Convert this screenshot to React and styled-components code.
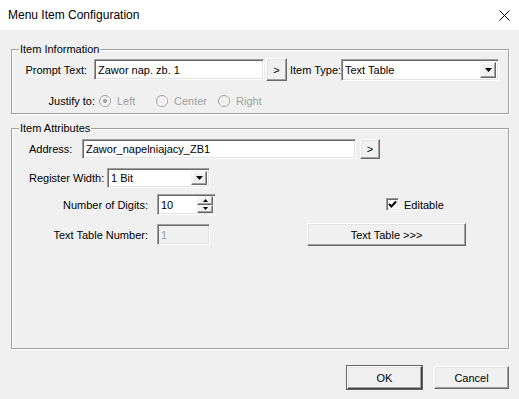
import React from 'react';
import styled, { createGlobalStyle } from 'styled-components';

const GlobalStyle = createGlobalStyle`
  html, body {
    margin: 0;
    padding: 0;
    background: #f0f0f0;
  }
  body {
    font-family: 'Liberation Sans', Arial, sans-serif;
    font-size: 11px;
    color: #000;
  }
`;

const Window = styled.div`
  width: 519px;
  height: 399px;
  background: #f0f0f0;
  display: flex;
  flex-direction: column;
  overflow: hidden;
`;

const TitleBar = styled.div`
  height: 30px;
  flex: none;
  background: #fff;
  display: flex;
  align-items: center;
  justify-content: space-between;
  padding: 0 9px 0 8px;
  box-sizing: border-box;
  font-size: 12px;
`;

const Group = styled.fieldset`
  margin: ${({ $top }) => $top}px 0 0 11px;
  padding: 0;
  width: 498px;
  height: ${({ $height }) => $height}px;
  box-sizing: border-box;
  border: 1px solid #a0a0a0;
  box-shadow: 1px 1px 0 #fff, inset 1px 1px 0 #fff;
  min-width: 0;
`;

const Legend = styled.legend`
  margin-left: 7px;
  padding: 0 1px;
  line-height: 13px;
  background: #f0f0f0;
`;

const Row = styled.div`
  display: flex;
  align-items: center;
  height: ${({ $h }) => $h}px;
  margin-top: ${({ $mt }) => $mt || 0}px;
  padding-left: ${({ $pl }) => $pl || 0}px;
`;

const Label = styled.span`
  flex: none;
  width: ${({ $w }) => $w}px;
  text-align: ${({ $align }) => $align || 'left'};
  padding-right: ${({ $pr }) => $pr || 0}px;
  box-sizing: border-box;
  white-space: nowrap;
  color: ${({ $disabled }) => ($disabled ? '#a0a0a0' : '#000')};
`;

const Field = styled.div`
  flex: none;
  width: ${({ $w }) => $w}px;
  height: ${({ $h }) => $h || 20}px;
  box-sizing: border-box;
  display: flex;
  align-items: center;
  padding-left: 3px;
  background: ${({ $disabled }) => ($disabled ? '#f0f0f0' : '#fff')};
  color: ${({ $disabled }) => ($disabled ? '#a0a0a0' : '#000')};
  border: 1px solid;
  border-color: #a0a0a0 #fff #fff #a0a0a0;
  box-shadow: inset 1px 1px 0 #696969, inset -1px -1px 0 #e3e3e3;
  white-space: nowrap;
  overflow: hidden;
`;

const Button = styled.div`
  flex: none;
  width: ${({ $w }) => $w}px;
  height: ${({ $h }) => $h || 23}px;
  margin-left: ${({ $ml }) => $ml || 0}px;
  box-sizing: border-box;
  display: flex;
  align-items: center;
  justify-content: center;
  background: #f0f0f0;
  border: 1px solid;
  border-color: ${({ $default }) =>
    $default ? '#fff #404040 #404040 #fff' : '#fff #696969 #696969 #fff'};
  box-shadow: ${({ $default }) =>
    $default
      ? 'inset -1px -1px 0 #a0a0a0, inset 1px 1px 0 #e3e3e3, 0 0 0 1px #646464'
      : 'inset -1px -1px 0 #a0a0a0, inset 1px 1px 0 #e3e3e3'};
`;

const Select = styled(Field)`
  padding-right: 2px;
  justify-content: space-between;
`;

const ArrowButton = styled.div`
  width: 16px;
  height: calc(100% - 4px);
  box-sizing: border-box;
  display: flex;
  align-items: center;
  justify-content: center;
  background: #f0f0f0;
  border: 1px solid;
  border-color: #f0f0f0 #696969 #696969 #f0f0f0;
  box-shadow: inset -1px -1px 0 #a0a0a0, inset 1px 1px 0 #fff;
`;

const Spin = styled(Field)`
  padding-right: 2px;
  justify-content: space-between;
`;

const SpinButtons = styled.div`
  display: flex;
  flex-direction: column;
  width: 16px;
  height: 100%;
  padding: 1px 0;
  box-sizing: border-box;
`;

const SpinButton = styled(ArrowButton)`
  width: 16px;
  height: 50%;
`;

const Radios = styled.div`
  display: flex;
  align-items: center;
`;

const RadioItem = styled.div`
  display: flex;
  align-items: center;
  gap: 6px;
  width: ${({ $w }) => ($w ? `${$w}px` : 'auto')};
  color: #a0a0a0;
`;

const Attributes = styled.div`
  display: grid;
  grid-template-columns: 295px 1fr;
  align-items: center;
`;

const CheckRow = styled.div`
  display: flex;
  align-items: center;
  gap: 5px;
  padding-left: 79px;
`;

const CheckBox = styled.div`
  width: 13px;
  height: 13px;
  box-sizing: border-box;
  background: #fff;
  border: 1px solid;
  border-color: #a0a0a0 #fff #fff #a0a0a0;
  box-shadow: inset 1px 1px 0 #696969, inset -1px -1px 0 #e3e3e3;
  display: flex;
  align-items: center;
  justify-content: center;
`;

const Footer = styled.div`
  display: flex;
  justify-content: flex-end;
  gap: 12px;
  margin-top: 17px;
  padding-right: 10px;
`;

const Triangle = ({ up }) => (
  <svg width="7" height="4" viewBox="0 0 7 4">
    <polygon points={up ? '3.5,0 7,4 0,4' : '0,0 7,0 3.5,4'} fill="#000" />
  </svg>
);

const SmallTriangle = ({ up }) => (
  <svg width="5" height="3" viewBox="0 0 5 3">
    <polygon points={up ? '2.5,0 5,3 0,3' : '0,0 5,0 2.5,3'} fill="#000" />
  </svg>
);

const Radio = ({ checked }) => (
  <svg width="12" height="12" viewBox="0 0 12 12">
    <circle cx="6" cy="6" r="5.5" fill="#f0f0f0" stroke="#a0a0a0" />
    <path d="M2.5 9.5 A5 5 0 0 0 9.5 2.5" stroke="#fff" fill="none" />
    {checked && <circle cx="6" cy="6" r="2" fill="#a0a0a0" />}
  </svg>
);

const CloseIcon = () => (
  <svg width="11" height="11" viewBox="0 0 11 11">
    <path d="M0.5 0.5 L10.5 10.5 M10.5 0.5 L0.5 10.5" stroke="#000" strokeWidth="1" />
  </svg>
);

const Check = () => (
  <svg width="9" height="9" viewBox="0 0 9 9">
    <path d="M1 4 L3.5 6.5 L8 1.5" stroke="#000" strokeWidth="2" fill="none" />
  </svg>
);

export default function App() {
  return (
    <Window>
      <GlobalStyle />
      <TitleBar>
        <span>Menu Item Configuration</span>
        <CloseIcon />
      </TitleBar>

      <Group $top={13} $height={71}>
        <Legend>Item Information</Legend>
        <Row $h={23} $mt={2}>
          <Label $w={82} $align="right" $pr={7}>
            Prompt Text:
          </Label>
          <Field $w={170} $h={21}>
            Zawor nap. zb. 1
          </Field>
          <Button $w={21} $ml={2}>
            &gt;
          </Button>
          <Label $w={54} $pr={1} style={{ paddingLeft: 3 }}>
            Item Type:
          </Label>
          <Select $w={158} $h={22}>
            <span>Text Table</span>
            <ArrowButton>
              <Triangle />
            </ArrowButton>
          </Select>
        </Row>
        <Row $h={14} $mt={13}>
          <Label $w={87} $align="right" $pr={4}>
            Justify to:
          </Label>
          <Radios>
            <RadioItem $w={57}>
              <Radio checked />
              Left
            </RadioItem>
            <RadioItem $w={62}>
              <Radio />
              Center
            </RadioItem>
            <RadioItem>
              <Radio />
              Right
            </RadioItem>
          </Radios>
        </Row>
      </Group>

      <Group $top={8} $height={227}>
        <Legend>Item Attributes</Legend>
        <Row $h={20} $mt={4} $pl={17}>
          <Label $w={53}>Address:</Label>
          <Field $w={274}>Zawor_napelniajacy_ZB1</Field>
          <Button $w={20} $h={20} $ml={4}>
            &gt;
          </Button>
        </Row>
        <Row $h={20} $mt={9} $pl={17}>
          <Label $w={78}>Register Width:</Label>
          <Select $w={103}>
            <span>1 Bit</span>
            <ArrowButton>
              <Triangle />
            </ArrowButton>
          </Select>
        </Row>
        <Attributes>
          <Row $h={21} $mt={6}>
            <Label $w={145} $align="right" $pr={9}>
              Number of Digits:
            </Label>
            <Spin $w={59} $h={21}>
              <span>10</span>
              <SpinButtons>
                <SpinButton>
                  <SmallTriangle up />
                </SpinButton>
                <SpinButton>
                  <SmallTriangle />
                </SpinButton>
              </SpinButtons>
            </Spin>
          </Row>
          <CheckRow style={{ marginTop: 6 }}>
            <CheckBox>
              <Check />
            </CheckBox>
            Editable
          </CheckRow>
          <Row $h={23} $mt={8}>
            <Label $w={145} $align="right" $pr={9}>
              Text Table Number:
            </Label>
            <Field $w={53} $h={21} $disabled>
              1
            </Field>
          </Row>
          <Row $h={23} $mt={8}>
            <Button $w={159}>Text Table &gt;&gt;&gt;</Button>
          </Row>
        </Attributes>
      </Group>

      <Footer>
        <Button $w={75} $default>
          OK
        </Button>
        <Button $w={75}>Cancel</Button>
      </Footer>
    </Window>
  );
}
